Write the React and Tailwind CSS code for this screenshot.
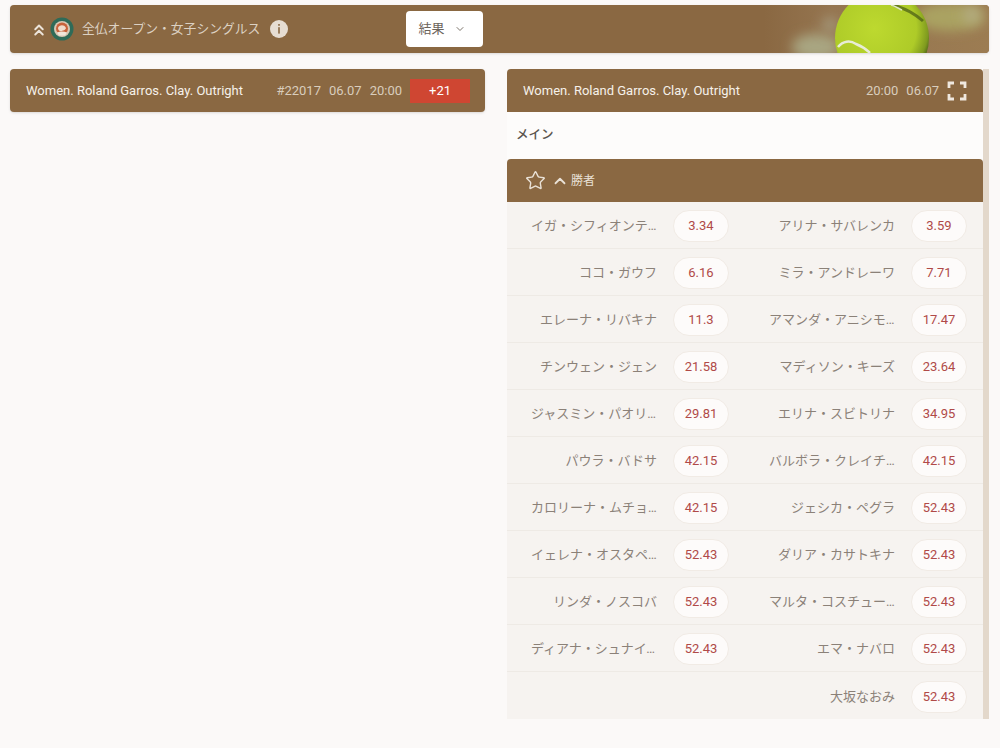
import React from 'react';
import { ChevronDown, ChevronUp, ChevronsUp, Star } from 'lucide-react';

const rows = [
  ['イガ・シフィオンテク', '3.34', 'アリナ・サバレンカ', '3.59'],
  ['ココ・ガウフ', '6.16', 'ミラ・アンドレーワ', '7.71'],
  ['エレーナ・リバキナ', '11.3', 'アマンダ・アニシモワ', '17.47'],
  ['チンウェン・ジェン', '21.58', 'マディソン・キーズ', '23.64'],
  ['ジャスミン・パオリーニ', '29.81', 'エリナ・スビトリナ', '34.95'],
  ['パウラ・バドサ', '42.15', 'バルボラ・クレイチコワ', '42.15'],
  ['カロリーナ・ムチョバ', '42.15', 'ジェシカ・ペグラ', '52.43'],
  ['イェレナ・オスタペンコ', '52.43', 'ダリア・カサトキナ', '52.43'],
  ['リンダ・ノスコバ', '52.43', 'マルタ・コスチューク', '52.43'],
  ['ディアナ・シュナイダー', '52.43', 'エマ・ナバロ', '52.43'],
  [null, null, '大坂なおみ', '52.43'],
];

const Odd = ({ name, price }) => (
  <div className="flex items-center justify-end pr-4 pt-0.5">
    {name && (
      <>
        <span className="w-[126px] truncate text-right text-[13px] text-[#8b8178]">{name}</span>
        <button className="ml-4 h-8 w-14 shrink-0 rounded-2xl border border-[#f1ebe5] bg-[#fdfbfa] text-[13px] text-[#b04a48]">
          {price}
        </button>
      </>
    )}
  </div>
);

const RollandLogo = () => (
  <svg width="24" height="24" viewBox="0 0 24 24">
    <circle cx="12" cy="12" r="11.5" fill="#2f6b58" />
    <circle cx="12" cy="12" r="8" fill="#d8c8b4" />
    <circle cx="12" cy="11.5" r="6" fill="#c8623a" />
    <path d="M8 11c1-3 6-4 8 0-1 3-3 2-4 3-2 1-4-1-4-3z" fill="#f0dccb" />
    <path d="M7 15.5c3-1.5 7-1.500 10 0l-2 3H9z" fill="#f1e6da" />
  </svg>
);

const InfoDot = () => (
  <svg width="18" height="18" viewBox="0 0 18 18">
    <circle cx="9" cy="9" r="9" fill="#e6ddd2" />
    <rect x="8.2" y="4" width="1.6" height="1.8" fill="#8a6842" />
    <rect x="8.2" y="7.2" width="1.6" height="6.4" fill="#8a6842" />
  </svg>
);

const FullscreenIcon = () => (
  <svg width="20" height="20" viewBox="0 0 20 20" fill="none" stroke="#efe8df" strokeWidth="2.8">
    <path d="M2 7V2h5M13 2h5v5M18 13v5h-5M7 18H2v-5" />
  </svg>
);

const TennisBanner = () => (
  <svg width="225" height="48" viewBox="0 0 225 48" className="absolute right-0 top-0">
    <defs>
      <radialGradient id="ball" cx="0.42" cy="0.4" r="0.62">
        <stop offset="0" stopColor="#bdd92f" />
        <stop offset="0.72" stopColor="#aecb28" />
        <stop offset="0.92" stopColor="#7f9a1f" />
        <stop offset="1" stopColor="#4f6418" />
      </radialGradient>
      <linearGradient id="dust" x1="0" x2="1">
        <stop offset="0" stopColor="#8a6842" />
        <stop offset="0.3" stopColor="#957550" />
        <stop offset="1" stopColor="#9c7c52" />
      </linearGradient>
      <filter id="soft" x="-100%" y="-100%" width="300%" height="300%">
        <feGaussianBlur stdDeviation="6" />
      </filter>
      <clipPath id="bannerClip">
        <rect width="225" height="48" />
      </clipPath>
    </defs>
    <g clipPath="url(#bannerClip)">
      <rect width="225" height="48" fill="url(#dust)" />
      <ellipse cx="52" cy="42" rx="24" ry="13" fill="#a9a682" filter="url(#soft)" />
      <ellipse cx="66" cy="20" rx="8" ry="8" fill="#a39577" filter="url(#soft)" />
      <ellipse cx="186" cy="12" rx="34" ry="14" fill="#aaa362" filter="url(#soft)" />
      <ellipse cx="208" cy="10" rx="9" ry="9" fill="#b3ab80" filter="url(#soft)" />
      <circle cx="118" cy="33" r="47" fill="url(#ball)" />
      <path d="M74 42c5-6 12-7 18-3 5 2 10 5 14 9" fill="none" stroke="#e8ecd6" strokeWidth="2.5" />
      <path d="M129 0c11 3 21 8 30 16" fill="none" stroke="#3f5214" strokeWidth="3" opacity="0.65" />
      <path d="M127 0c4 1 7 3 11 5" fill="none" stroke="#dfe6c0" strokeWidth="1.500" />
    </g>
  </svg>
);

export default function App() {
  return (
    <div
      className="h-[748px] w-[1000px] overflow-hidden bg-[#fbf9f8] pl-[10px] pr-[11px] pt-[5px]"
      style={{ fontFamily: 'Roboto, "Noto Sans CJK JP", sans-serif' }}
    >
      <header className="relative flex h-12 items-center overflow-hidden rounded-sm bg-[#8a6842] pl-5 shadow-sm">
        <ChevronsUp size={18} strokeWidth={2.6} className="mt-0.5 text-[#ece4da]" />
        <span className="ml-[2px]"><RollandLogo /></span>
        <span className="ml-2 text-[12.8px] text-[#dcd1c3]">全仏オープン・女子シングルス</span>
        <span className="ml-[10px]"><InfoDot /></span>
        <button className="ml-[118px] flex h-9 w-[77px] items-center gap-[10px] rounded-sm bg-white pl-3 text-[13px] text-[#6b635b]">
          結果
          <ChevronDown size={12} className="text-[#7d756c]" />
        </button>
        <TennisBanner />
      </header>

      <main className="mt-4 flex items-start justify-between">
        <div className="flex h-[43px] w-[475px] items-center justify-between rounded-sm bg-[#8a6842] pl-4 pr-[15px] shadow-sm">
          <span className="text-[13px] text-[#f6f1ea]">Women. Roland Garros. Clay. Outright</span>
          <div className="flex items-center gap-2 text-[13px] text-[#d9cdbd]">
            <span>#22017</span>
            <span>06.07</span>
            <span>20:00</span>
            <span className="flex h-6 w-[60px] items-center justify-center bg-[#cf4632] text-white">+21</span>
          </div>
        </div>

        <section className="flex w-[482px] border-r-[6px] border-[#e3d8cb]">
          <div className="w-[476px]">
            <div className="flex h-[43px] items-center justify-between rounded-t-sm bg-[#8a6842] pl-4 pr-4">
              <span className="text-[13px] text-[#f6f1ea]">Women. Roland Garros. Clay. Outright</span>
              <div className="flex items-center gap-2 text-[13px] text-[#d9cdbd]">
                <span>20:00</span>
                <span>06.07</span>
                <FullscreenIcon />
              </div>
            </div>
            <div className="flex h-[47px] items-center bg-[#fdfcfb] pl-[9px] text-[12.5px] font-medium text-[#5a544e]">メイン</div>
            <div className="flex h-[43px] items-center rounded-t-sm bg-[#8a6842] pl-[18px] text-[#e9e1d6]">
              <Star size={21} strokeWidth={1.6} />
              <ChevronUp size={18} strokeWidth={2.4} className="ml-[5px]" />
              <span className="ml-[2px] text-xs">勝者</span>
            </div>
            <div className="divide-y divide-[#eeeae5] bg-[#f6f3f0]">
              {rows.map((r, i) => (
                <div key={i} className="grid h-[47px] grid-cols-2">
                  <Odd name={r[0]} price={r[1]} />
                  <Odd name={r[2]} price={r[3]} />
                </div>
              ))}
            </div>
          </div>
        </section>
      </main>
    </div>
  );
}
